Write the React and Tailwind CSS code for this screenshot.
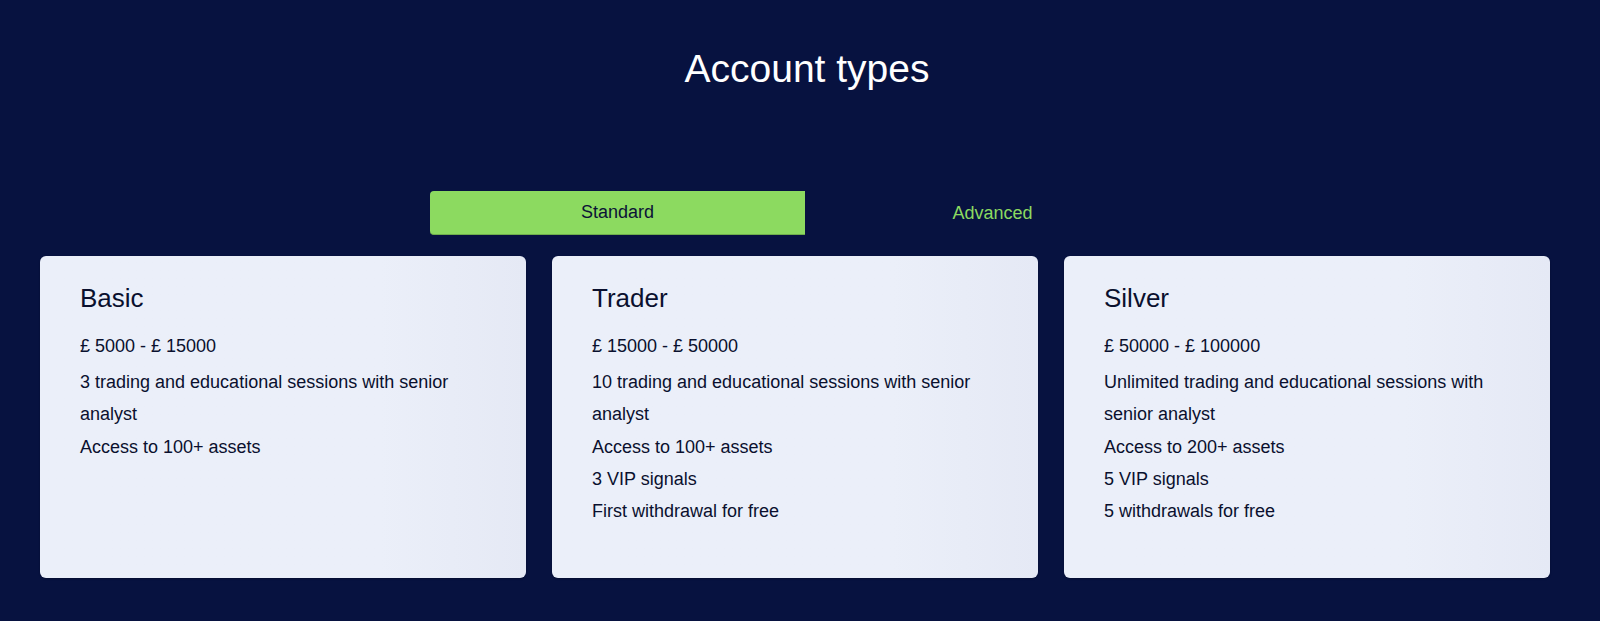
import { useState } from 'react';

const plans = {
  standard: [
    {
      name: 'Basic',
      range: '£ 5000 - £ 15000',
      perks: ['3 trading and educational sessions with senior analyst', 'Access to 100+ assets'],
    },
    {
      name: 'Trader',
      range: '£ 15000 - £ 50000',
      perks: [
        '10 trading and educational sessions with senior analyst',
        'Access to 100+ assets',
        '3 VIP signals',
        'First withdrawal for free',
      ],
    },
    {
      name: 'Silver',
      range: '£ 50000 - £ 100000',
      perks: [
        'Unlimited trading and educational sessions with senior analyst',
        'Access to 200+ assets',
        '5 VIP signals',
        '5 withdrawals for free',
      ],
    },
  ],
};

export default function App() {
  const [tab, setTab] = useState('standard');
  const cards = plans.standard;

  return (
    <section
      className="min-h-[621px] bg-[#071240] pb-[43px]"
      style={{ fontFamily: '"Liberation Sans", Arial, sans-serif' }}
    >
      <h2 className="pl-[14px] pt-[49px] text-center text-[39px] leading-none text-white">Account types</h2>

      {/* Tabs */}
      <div className="mt-[103px] flex justify-center pl-[10px]">
        <button
          onClick={() => setTab('standard')}
          className={`h-[44px] w-[375px] rounded-l-[4px] text-[18px] ${
            tab === 'standard'
              ? 'bg-[#8cda60] text-[#0b1236] border-b border-[#6fae4c]'
              : 'text-[#8cda60]'
          }`}
        >
          Standard
        </button>
        <button
          onClick={() => setTab('advanced')}
          className={`h-[44px] w-[375px] rounded-r-[4px] text-[18px] ${
            tab === 'advanced'
              ? 'bg-[#8cda60] text-[#0b1236] border-b border-[#6fae4c]'
              : 'text-[#8cda60]'
          }`}
        >
          Advanced
        </button>
      </div>

      {/* Cards */}
      <div className="mt-[21px] grid grid-cols-3 gap-[26px] pl-[40px] pr-[50px]">
        {cards.map((card) => (
          <div
            key={card.name}
            className="h-[322px] rounded-[6px] bg-linear-to-r from-[#ebeff9] from-70% to-[#e5e9f5] px-[40px] pt-[29px] text-[#0a102e] shadow-[0_1px_2px_rgba(0,0,0,0.25)]"
          >
            <h3 className="text-[26px] leading-none">{card.name}</h3>
            <p className="mt-[19px] mb-[4px] text-[18px] leading-[32.2px]">{card.range}</p>
            {card.perks.map((perk) => (
              <p key={perk} className="text-[18px] leading-[32.2px]">
                {perk}
              </p>
            ))}
          </div>
        ))}
      </div>
    </section>
  );
}
